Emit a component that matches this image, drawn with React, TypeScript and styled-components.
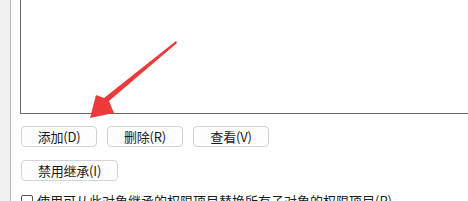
import styled, { createGlobalStyle } from "styled-components";

const GlobalStyle = createGlobalStyle`
  html, body {
    margin: 0;
    padding: 0;
    background: #ffffff;
    overflow: hidden;
  }
  body {
    font-family: "Noto Sans CJK SC", "Noto Sans", sans-serif;
    color: #1b1b1b;
  }
`;

const Page = styled.div`
  position: relative;
  display: flex;
  width: 468px;
  height: 201px;
  overflow: hidden;
  background: #ffffff;
`;

const SideStrip = styled.div`
  flex: 0 0 10px;
  background: #f0f0f0;
  border-right: 1px solid #b9b9b9;
`;

const Panel = styled.div`
  flex: 1;
  min-width: 0;
  display: flex;
  flex-direction: column;
  padding-left: 9px;
`;

/* the list box runs on past the right and top edges of the crop */
const ListBox = styled.div`
  flex-shrink: 0;
  height: 113px;
  margin-right: -12px;
  border-left: 1px solid #6a6a6a;
  border-bottom: 1px solid #6a6a6a;
  background: #ffffff;
`;

const ButtonRow = styled.div<{ $top: number }>`
  flex-shrink: 0;
  display: flex;
  gap: 10px;
  margin-top: ${(p) => p.$top}px;
  padding-left: 1px;
`;

const Button = styled.button<{ $w?: number }>`
  box-sizing: border-box;
  width: ${(p) => p.$w ?? 76}px;
  height: 21px;
  padding: 0;
  border: 1px solid #d2d2d2;
  border-radius: 4px;
  background: #fdfdfd;
  font-family: "Noto Sans CJK SC", "Noto Sans", sans-serif;
  font-size: 13px;
  line-height: 19px;
  color: #1b1b1b;
  letter-spacing: -0.2px;
`;

const CheckRow = styled.label`
  flex-shrink: 0;
  display: flex;
  align-items: center;
  gap: 4px;
  margin-top: 12px;
  padding-left: 1px;
  font-size: 13px;
  line-height: 16px;
  white-space: nowrap;
`;

const Box = styled.span`
  box-sizing: border-box;
  width: 12px;
  height: 12px;
  border: 1px solid #555555;
  border-radius: 2px;
  background: #ffffff;
`;

const Arrow = styled.svg`
  position: absolute;
  left: 0;
  top: 0;
  pointer-events: none;
`;

export default function App() {
  return (
    <>
      <GlobalStyle />
      <Page>
        <SideStrip />
        <Panel>
          <ListBox />
          <ButtonRow $top={12}>
            <Button>添加(D)</Button>
            <Button>删除(R)</Button>
            <Button>查看(V)</Button>
          </ButtonRow>
          <ButtonRow $top={13}>
            <Button $w={97}>禁用继承(I)</Button>
          </ButtonRow>
          <CheckRow>
            <Box />
            使用可从此对象继承的权限项目替换所有子对象的权限项目(P)
          </CheckRow>
        </Panel>
        <Arrow width="468" height="201" viewBox="0 0 468 201">
          <polygon
            points="176,41 177,43 109,101 114,113 90,118 96,95 104,98"
            fill="#ec3a3a"
          />
        </Arrow>
      </Page>
    </>
  );
}
